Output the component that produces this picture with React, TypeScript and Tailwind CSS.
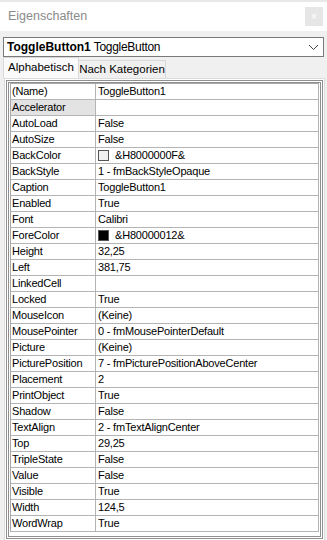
import React from "react";

type Row = { name: string; value: string; swatch?: string; selected?: boolean };

const ROWS: Row[] = [
  { name: "(Name)", value: "ToggleButton1" },
  { name: "Accelerator", value: "", selected: true },
  { name: "AutoLoad", value: "False" },
  { name: "AutoSize", value: "False" },
  { name: "BackColor", value: "&H8000000F&", swatch: "#f0f0f0" },
  { name: "BackStyle", value: "1 - fmBackStyleOpaque" },
  { name: "Caption", value: "ToggleButton1" },
  { name: "Enabled", value: "True" },
  { name: "Font", value: "Calibri" },
  { name: "ForeColor", value: "&H80000012&", swatch: "#000000" },
  { name: "Height", value: "32,25" },
  { name: "Left", value: "381,75" },
  { name: "LinkedCell", value: "" },
  { name: "Locked", value: "True" },
  { name: "MouseIcon", value: "(Keine)" },
  { name: "MousePointer", value: "0 - fmMousePointerDefault" },
  { name: "Picture", value: "(Keine)" },
  { name: "PicturePosition", value: "7 - fmPicturePositionAboveCenter" },
  { name: "Placement", value: "2" },
  { name: "PrintObject", value: "True" },
  { name: "Shadow", value: "False" },
  { name: "TextAlign", value: "2 - fmTextAlignCenter" },
  { name: "Top", value: "29,25" },
  { name: "TripleState", value: "False" },
  { name: "Value", value: "False" },
  { name: "Visible", value: "True" },
  { name: "Width", value: "124,5" },
  { name: "WordWrap", value: "True" },
];

export default function App() {
  return (
    <div className="relative h-[540px] w-[327px] overflow-hidden bg-[#f0f0f0] font-['Liberation_Sans',sans-serif] text-black">
      {/* title bar */}
      <div className="flex h-[31px] items-center justify-between border-t-2 border-[#e8e8e8] bg-white pl-[8px] pr-[4px]">
        <span className="text-[12.5px] text-[#8a8a8a]">Eigenschaften</span>
        <div className="flex h-[19px] w-[18px] items-center justify-center bg-[#e6e6e6] text-[11px] leading-none text-white">
          ×
        </div>
      </div>

      {/* object dropdown */}
      <div className="mx-[3px] mt-[6px] flex h-[20px] items-center border border-[#7a7a7a] bg-white pl-[3px] pr-[4px] text-[12px]">
        <span className="font-bold">ToggleButton1</span>
        <span className="ml-[3px] tracking-[-0.3px]">ToggleButton</span>
        <svg className="ml-auto" width="11" height="7" viewBox="0 0 11 7">
          <path d="M1 1l4.5 4.5L10 1" fill="none" stroke="#444" strokeWidth="1" />
        </svg>
      </div>

      {/* tabs */}
      <div className="flex h-[21px] items-end whitespace-nowrap pl-[3px] text-[11.5px]">
        <div className="flex h-[21px] w-[76px] items-center justify-center border border-b-0 border-[#d9d9d9] bg-[#fafafa]">
          Alphabetisch
        </div>
        <div className="flex h-[18px] w-[87px] items-center justify-center border border-b-0 border-l-0 border-[#d9d9d9] bg-[#f0f0f0]">
          Nach Kategorien
        </div>
      </div>

      {/* grid */}
      <div className="ml-[4px] h-[463px] w-[321px] border border-[#dcdcdc] bg-white p-px">
        <div className="h-full border-[3px] border-double border-[#8f8f8f] bg-white px-px">
          <div className="border-l border-t border-[#a8a8a8] text-[11px] tracking-[-0.2px]">
            {ROWS.map((r) => (
              <div key={r.name} className="flex h-[16px] border-b border-r border-[#b4b4b4]">
                <div
                  className={`flex w-[85px] shrink-0 items-center border-r border-[#b4b4b4] pl-px ${
                    r.selected ? "bg-[#e3e3e3]" : ""
                  }`}
                >
                  {r.name}
                </div>
                <div className="flex items-center pl-[2px]">
                  {r.swatch && (
                    <span
                      className="mr-[6px] inline-block h-[11px] w-[11px] border border-[#555]"
                      style={{ backgroundColor: r.swatch }}
                    />
                  )}
                  {r.value}
                </div>
              </div>
            ))}
          </div>
        </div>
      </div>
    </div>
  );
}
